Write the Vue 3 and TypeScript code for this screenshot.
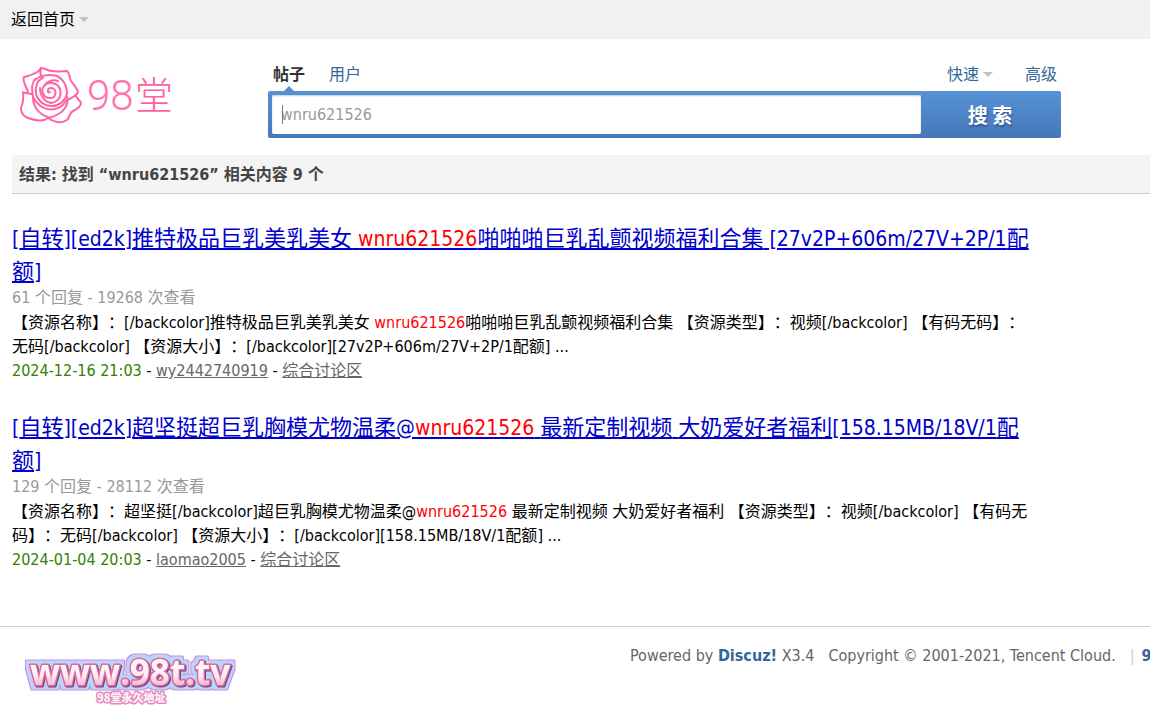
<script setup lang="ts">
import { ref } from 'vue'

interface Thread {
  id: number
  title: string
  replies: number
  views: number
  summary: string
  posted: string
  author: string
  forum: string
}

interface Run {
  text: string
  hit: boolean
  latin: boolean
}

const keyword = 'wnru621526'
const query = ref(keyword)

const threads: Thread[] = [
  {
    id: 1,
    title: '[自转][ed2k]推特极品巨乳美乳美女 wnru621526啪啪啪巨乳乱颤视频福利合集 [27v2P+606m/27V+2P/1配额]',
    replies: 61,
    views: 19268,
    summary:
      '【资源名称】：[/backcolor]推特极品巨乳美乳美女 wnru621526啪啪啪巨乳乱颤视频福利合集 【资源类型】：视频[/backcolor] 【有码无码】：无码[/backcolor] 【资源大小】：[/backcolor][27v2P+606m/27V+2P/1配额] ...',
    posted: '2024-12-16 21:03',
    author: 'wy2442740919',
    forum: '综合讨论区',
  },
  {
    id: 2,
    title: '[自转][ed2k]超坚挺超巨乳胸模尤物温柔@wnru621526 最新定制视频 大奶爱好者福利[158.15MB/18V/1配额]',
    replies: 129,
    views: 28112,
    summary:
      '【资源名称】：超坚挺[/backcolor]超巨乳胸模尤物温柔@wnru621526 最新定制视频 大奶爱好者福利 【资源类型】：视频[/backcolor] 【有码无码】：无码[/backcolor] 【资源大小】：[/backcolor][158.15MB/18V/1配额] ...',
    posted: '2024-01-04 20:03',
    author: 'laomao2005',
    forum: '综合讨论区',
  },
]

function runs(text: string): Run[] {
  return text
    .split(/(wnru621526|[\x20-\x7e]+?(?=wnru621526|[^\x20-\x7e]|$))/)
    .filter((part) => part !== '')
    .map((part) => ({
      text: part,
      hit: part === keyword,
      latin: /^[\x20-\x7e]+$/.test(part),
    }))
}
</script>

<template>
  <div class="page">
    <nav class="topbar">
      <a href="#" class="home">返回首页<i class="arrow"></i></a>
    </nav>

    <header class="header">
      <a href="#" class="logo" aria-label="98堂">
        <svg width="160" height="66" viewBox="0 0 160 66">
          <g fill="none" stroke="#ff62a5" stroke-width="2" stroke-linejoin="round" stroke-linecap="round">
            <path d="M21 5C25 5 28 8 32 8C38 9 42 8 47 8C50 10 49 14 51 18C54 22 57 25 58 29C57 33 51 35 46 38" />
            <path d="M21 5C19 8 17 10 13 11C10 13 7 13 4 14C2 18 6 23 8 29" />
            <path d="M12 31C9 30 6 31 3 29C4 36 3 40 1 45C1 50 3 53 8 55C16 58 23 59 28 55C34 54 42 50 45 45C47 42 48 38 47 34" />
            <path d="M28 55C34 59 41 61 47 57C50 54 49 50 53 48C57 46 61 43 61 40C60 37 57 36 56 33" />
            <path d="M21 5C20 9 20 12 22 14M15 17C20 12 30 11 37 13C45 17 47 24 47 31C45 38 39 43 32 43C24 43 18 38 16 31C15 24 17 17 23 15" />
            <path d="M15 16C11 21 12 27 13 34C13 43 18 51 28 54" />
            <path d="M13 34C18 43 26 48 35 46C39 45 43 43 45 39" />
            <path d="M30 29C27 31 27 25 31 25C37 25 37 34 31 35C24 36 20 28 24 23C28 18 37 19 40 26C42 33 38 39 31 40" />
            <path d="M20 25C20 33 25 39 31 40M24 23C26 19 32 16 38 18" />
          </g>
          <text x="67" y="47" class="brand-num">98</text>
          <text x="115" y="46" class="brand-cjk">堂</text>
        </svg>
      </a>

      <form class="search" @submit.prevent>
        <div class="tabs">
          <a href="#" class="tab current">帖子</a>
          <a href="#" class="tab">用户</a>
          <a href="#" class="tab quick">快速<i class="arrow"></i></a>
          <a href="#" class="tab">高级</a>
        </div>
        <div class="box">
          <label class="field">
            <input v-model="query" type="text" aria-label="搜索内容" />
            <span class="caret"></span>
          </label>
          <button type="submit">搜 索</button>
        </div>
      </form>
    </header>

    <main class="main">
      <h2 class="summary-bar">结果: 找到 “<em>wnru621526</em>” 相关内容 9 个</h2>
      <ul class="threads">
        <li v-for="t in threads" :key="t.id">
          <h3>
            <a href="#"><span v-for="(r, i) in runs(t.title)" :key="i" :class="{ hit: r.hit, latin: r.latin }">{{ r.text }}</span></a>
          </h3>
          <p class="stats">{{ t.replies }} 个回复 - {{ t.views }} 次查看</p>
          <p class="text"><span v-for="(r, i) in runs(t.summary)" :key="i" :class="{ hit: r.hit }">{{ r.text }}</span></p>
          <p class="byline">
            <span class="date">{{ t.posted }}</span> - <a href="#">{{ t.author }}</a> - <a href="#">{{ t.forum }}</a>
          </p>
        </li>
      </ul>
    </main>

    <footer class="footer">
      <a href="#" class="site" aria-label="www.98t.tv">
        <svg width="226" height="60" viewBox="0 0 226 60">
          <defs>
            <linearGradient id="face" x1="0" y1="0" x2="0" y2="1">
              <stop offset="0.4" stop-color="#fff7fa" />
              <stop offset="0.6" stop-color="#fdeaf1" />
              <stop offset="0.85" stop-color="#f6a9c6" />
            </linearGradient>
            <filter id="halo" x="-10%" y="-30%" width="120%" height="160%" color-interpolation-filters="sRGB">
              <feMorphology in="SourceAlpha" operator="dilate" radius="4" result="wide" />
              <feGaussianBlur in="wide" stdDeviation="0.5" result="wideSoft" />
              <feFlood flood-color="#cf8fdc" />
              <feComposite in2="wideSoft" operator="in" result="rim" />
              <feMorphology in="SourceAlpha" operator="dilate" radius="3" result="mid" />
              <feGaussianBlur in="mid" stdDeviation="0.5" result="midSoft" />
              <feFlood flood-color="#b9d6fa" />
              <feComposite in2="midSoft" operator="in" result="sky" />
              <feOffset in="SourceAlpha" dx="1" dy="1" result="moved" />
              <feFlood flood-color="#6a4080" />
              <feComposite in2="moved" operator="in" result="shade" />
              <feMerge>
                <feMergeNode in="rim" />
                <feMergeNode in="sky" />
                <feMergeNode in="shade" />
                <feMergeNode in="SourceGraphic" />
              </feMerge>
            </filter>
          </defs>
          <text x="6" y="37" class="domain" fill="url(#face)" filter="url(#halo)">www.98t.tv</text>
          <text x="73" y="54" class="tagline">98堂永久地址</text>
        </svg>
      </a>
      <p class="credits">
        <span>Powered by <a href="#">Discuz!</a> X3.4</span>
        <span>Copyright © 2001-2021, Tencent Cloud.</span>
        <span class="more"><i class="pipe">|</i><a href="#">98堂</a></span>
      </p>
    </footer>
  </div>
</template>

<style>
body {
  background: #fff;
  overflow-x: hidden;
}
</style>

<style scoped>
.page {
  font: 16px/24px "DejaVu Sans Condensed", "Noto Sans CJK SC", sans-serif;
  color: #000;
  text-spacing-trim: space-all;
  overflow: hidden;
}
p, h2, h3, ul {
  margin: 0;
  padding: 0;
}
a {
  color: #336699;
  text-decoration: none;
}
.topbar {
  height: 39px;
  display: flex;
  align-items: center;
  padding-left: 11px;
  background: #f1f1f1;
}
.home {
  color: #000;
}
.arrow {
  display: inline-block;
  vertical-align: middle;
  margin: 0 0 2px 4px;
  border: 5px solid transparent;
  border-top-color: #c0c0c0;
  border-bottom: 0;
}
.header {
  display: flex;
  padding: 24px 12px 17px;
}
.logo {
  flex: 0 0 256px;
  padding-left: 8px;
  box-sizing: border-box;
}
.logo svg, .site svg {
  display: block;
}
.brand-num {
  font: 300 42px Roboto, sans-serif;
  fill: #ff72ad;
}
.brand-cjk {
  font: 300 38px "Noto Sans CJK SC", sans-serif;
  fill: #ff5fa2;
}
.search {
  flex: 1;
  max-width: 793px;
}
.tabs {
  display: flex;
  gap: 24px;
  height: 28px;
  padding: 0 4px 0 5px;
  box-sizing: border-box;
}
.tab {
  height: 28px;
  line-height: 24px;
}
.quick {
  margin-left: auto;
  margin-right: 8px;
}
.current {
  position: relative;
  color: #333;
  font-weight: 700;
}
.current::after {
  content: "";
  position: absolute;
  left: 11px;
  bottom: 0;
  border: 5px solid transparent;
  border-bottom-color: #5590d3;
  border-top: 0;
}
.box {
  display: flex;
  height: 47px;
  padding: 4px 0;
  box-sizing: border-box;
  border-radius: 2px;
  background: linear-gradient(#5692d6, #4677b8);
}
.field {
  position: relative;
  flex: 1;
  display: flex;
  padding-left: 4px;
}
.field input {
  flex: 1;
  min-width: 0;
  padding: 0 9px;
  border: 0;
  outline: 0;
  border-radius: 2px;
  background: #fff;
  box-shadow: inset 0 1px 2px #c8cdd4;
  color: #999;
  font: inherit;
}
.caret {
  position: absolute;
  left: 14px;
  top: 10px;
  width: 1px;
  height: 19px;
  background: #777;
}
.box button {
  flex: 0 0 140px;
  padding: 0 2px 0 0;
  border: 0;
  background: none;
  color: #fff;
  font: 700 20px/38px "Noto Sans CJK SC", sans-serif;
  text-shadow: 1px 2px 2px #2f5a94;
}
.main {
  margin-left: 12px;
}
.summary-bar {
  padding: 8px 7px 7px;
  border-bottom: 1px solid #ccc;
  background: #f4f4f4;
  color: #444;
  font: 700 16px/23px "DejaVu Sans Condensed", "Noto Sans CJK SC", sans-serif;
}
.summary-bar em {
  font-style: normal;
}
.threads {
  list-style: none;
  max-width: 1025px;
  padding: 28px 0 26px;
}
.threads li {
  margin-bottom: 28px;
}
h3 {
  padding-bottom: 1px;
  font-size: 22px;
  font-weight: 400;
  line-height: 33px;
}
h3 a {
  color: #0000cc;
  text-decoration: underline 2px;
  text-underline-offset: 2px;
}
h3 .latin {
  font-size: 21px;
  line-height: 21px;
}
.hit {
  color: #f00;
}
.stats {
  margin-bottom: 4px;
  line-height: 18px;
  color: #999;
}
.date {
  color: #338000;
}
.byline a {
  color: #666;
  text-decoration: underline;
}
.footer {
  display: flex;
  align-items: flex-start;
  padding: 17px 0 0 24px;
  border-top: 1px solid #ccc;
}
.site {
  flex: 0 0 606px;
  padding-top: 4px;
}
.domain {
  font: 700 35px "Open Sans", sans-serif;
  stroke: #e0699c;
  stroke-width: 3px;
  stroke-linejoin: round;
  paint-order: stroke;
}
.tagline {
  font: 900 11px "Noto Sans CJK SC", sans-serif;
  fill: #fff3f8;
  stroke: #e58bc0;
  stroke-width: 3px;
  stroke-linejoin: round;
  paint-order: stroke;
}
.credits {
  display: flex;
  gap: 14px;
  white-space: nowrap;
  color: #666;
}
.credits a {
  color: #336699;
  font-weight: 700;
}
.pipe {
  margin-right: 7px;
  font-style: normal;
  color: #ccc;
}
</style>
